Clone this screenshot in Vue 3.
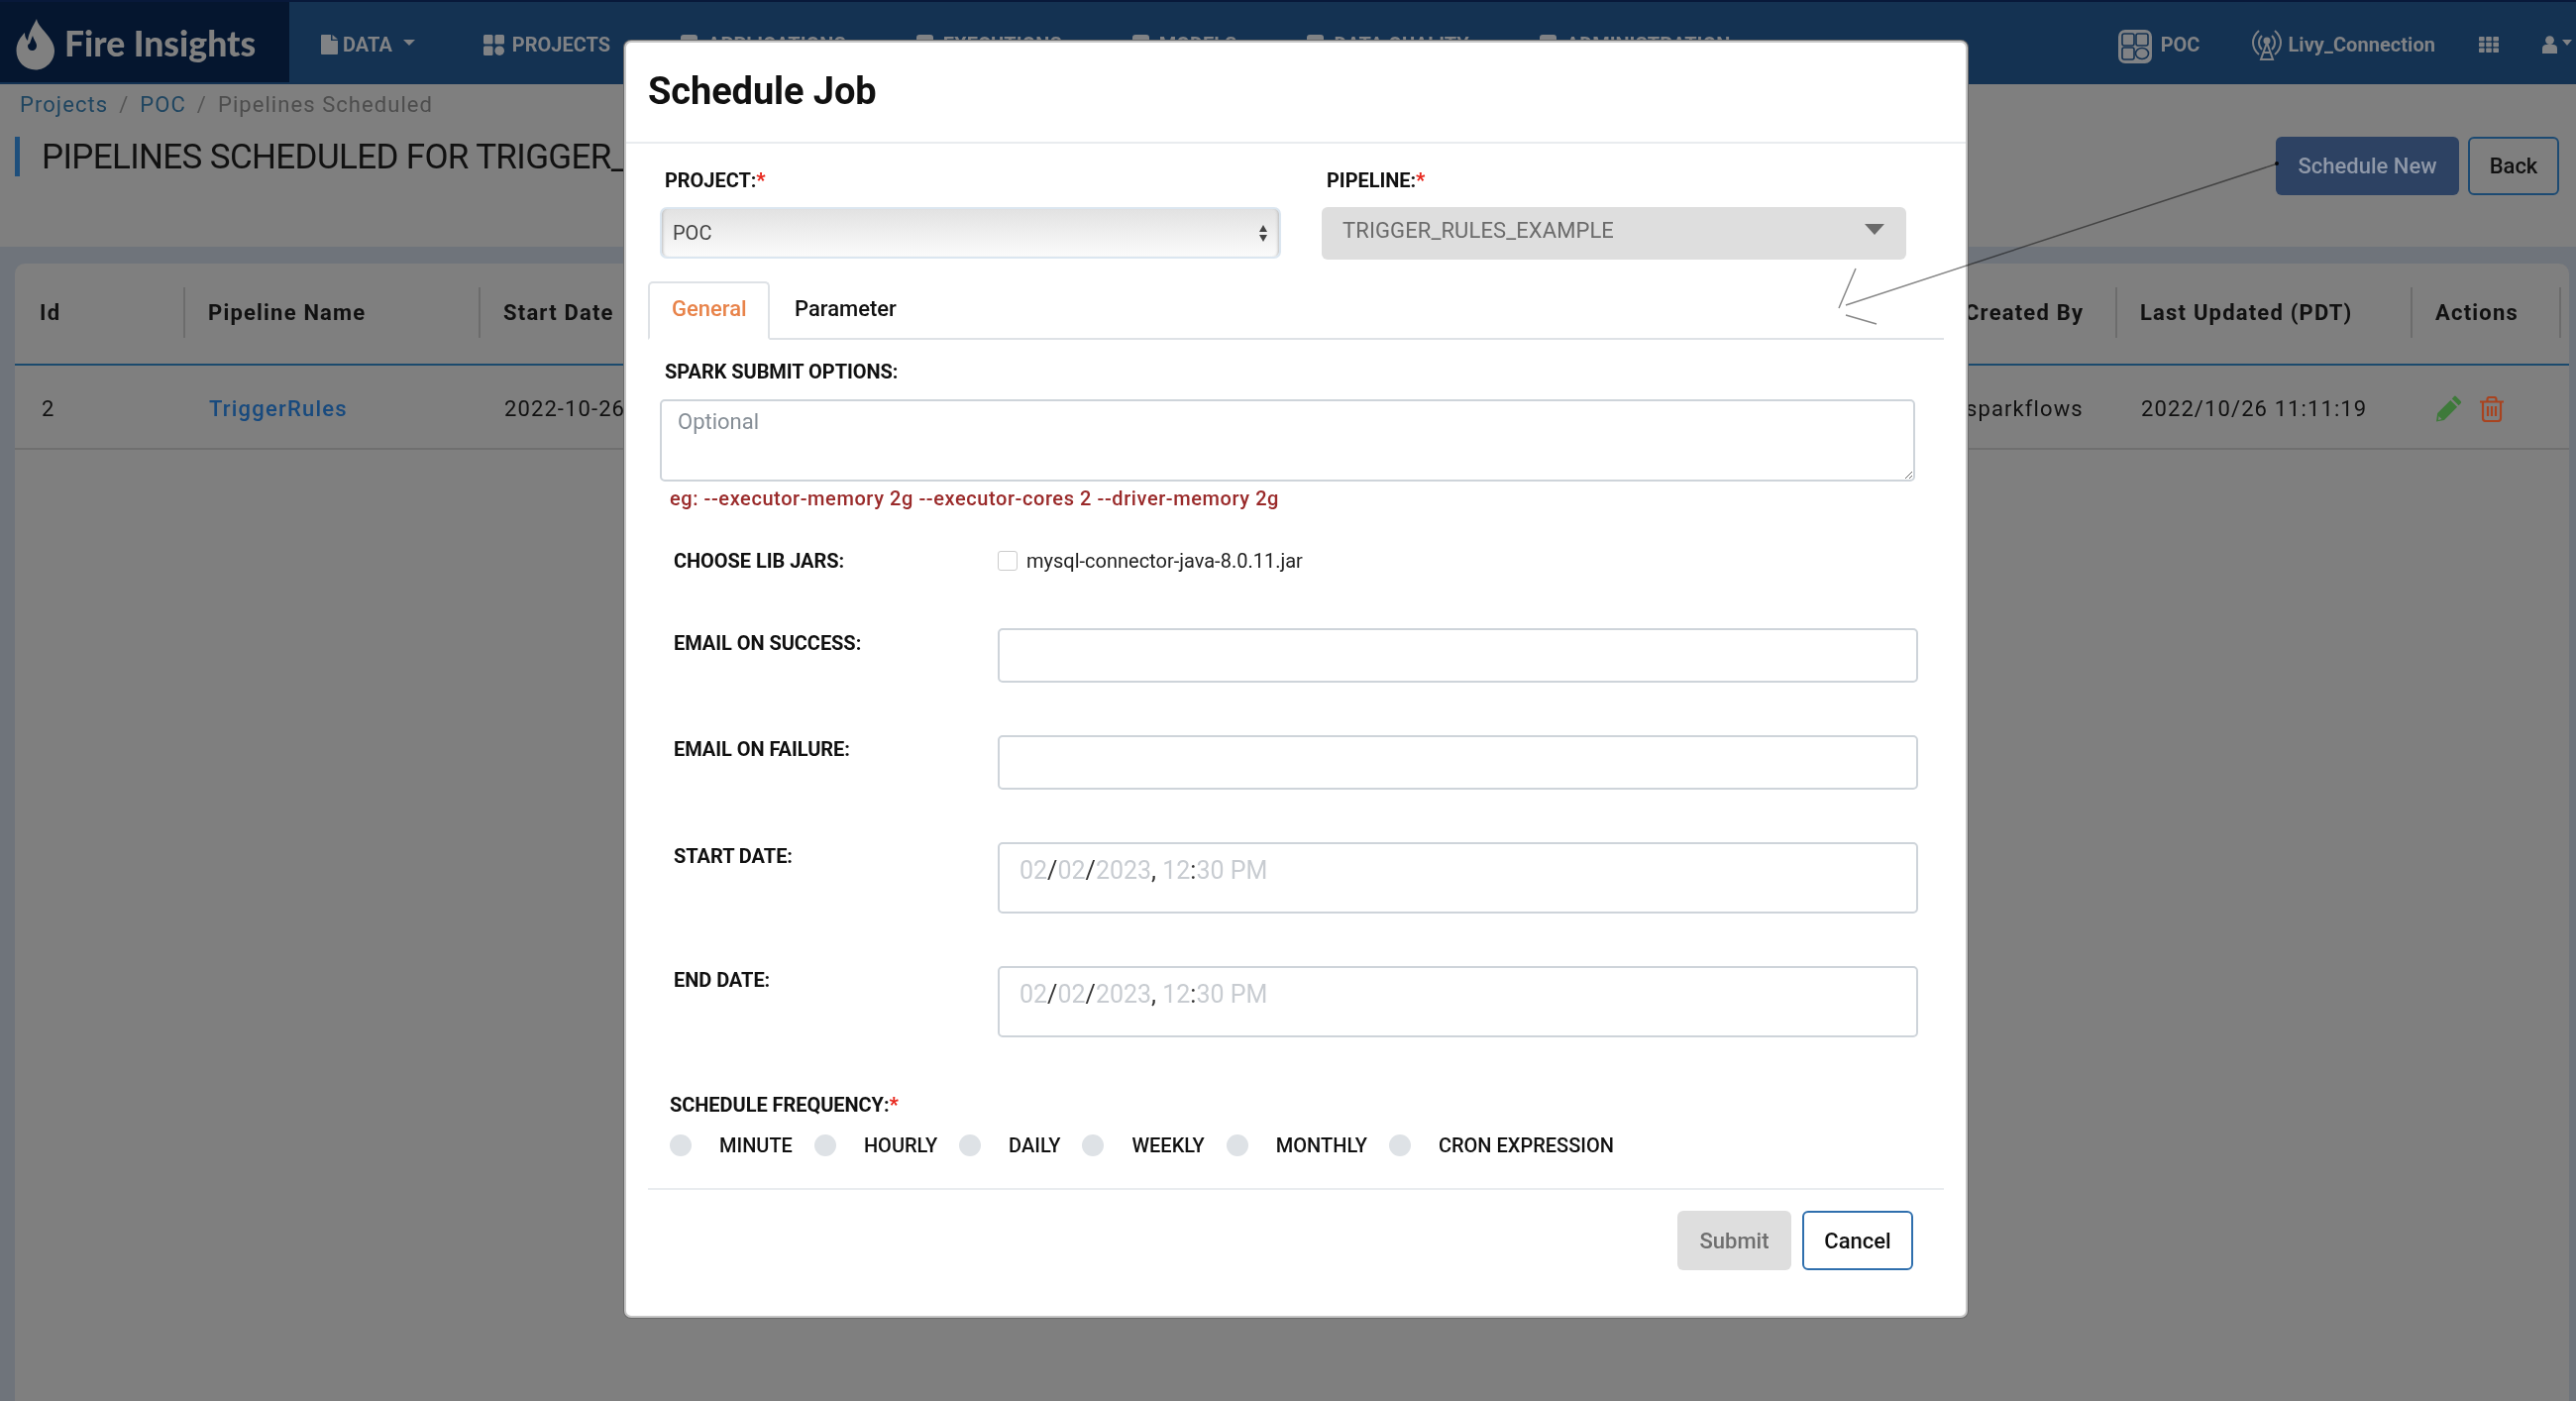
<script setup>
const hiddenNav = [
  { label: 'APPLICATIONS', icon: 'app' },
  { label: 'EXECUTIONS', icon: 'exec' },
  { label: 'MODELS', icon: 'model' },
  { label: 'DATA QUALITY', icon: 'db' },
  { label: 'ADMINISTRATION', icon: 'admin' },
]
const frequencies = ['MINUTE', 'HOURLY', 'DAILY', 'WEEKLY', 'MONTHLY', 'CRON EXPRESSION']
const dateFields = ['START DATE:', 'END DATE:']
</script>

<template>
  <div class="page">
    <header class="nav">
      <div class="brand">
        <svg class="flame" viewBox="16 19 40 52">
          <path fill-rule="evenodd" d="M37 19C38 28 55 38 55 51C55 62 46 70.5 36 70.5C25 70.5 16.5 62 16.5 51C16.5 43 21 37 25 33C25 37 26 39 28 41C29 33 33 27 37 19ZM33 36C34 40 37 43 37 46C37 49 35 51 32.5 51C30 51 28 49 28 46.5C28 45 29 44 30 44C31 41 32 38 33 36Z" />
        </svg>
        <span>Fire Insights</span>
      </div>
      <nav class="nav-items">
        <a class="nav-item data">
          <svg class="ico-data" viewBox="0 0 17 20"><path d="M1 0H10V6H17V19Q17 20 16 20H1Q0 20 0 19V1Q0 0 1 0ZM11.5 0L17 4.8H11.5Z" /></svg>
          DATA <i class="caret"></i>
        </a>
        <a class="nav-item">
          <svg class="ico-proj" viewBox="0 0 21 21">
            <rect width="9.5" height="9.5" rx="1.5" />
            <rect x="11.5" width="9.5" height="9.5" rx="1.5" />
            <rect y="11.5" width="9.5" height="9.5" rx="1.5" />
            <circle cx="16.2" cy="16.2" r="4.8" />
          </svg>
          PROJECTS
        </a>
        <a v-for="item in hiddenNav" :key="item.label" class="nav-item">
          <svg class="ico-proj" viewBox="0 0 21 21"><rect x="2" width="17" height="21" rx="3" /></svg>
          {{ item.label }}
        </a>
      </nav>
      <div class="nav-right">
        <a class="nav-item tight">
          <svg class="ico-poc" viewBox="0 0 34 34">
            <rect width="34" height="34" rx="7" class="fill" />
            <rect x="4" y="4" width="12" height="12" rx="2" class="cell" />
            <rect x="18" y="4" width="12" height="12" rx="2" class="cell" />
            <rect x="4" y="18" width="12" height="12" rx="2" class="cell" />
            <ellipse cx="24" cy="24" rx="6.5" ry="5.5" class="cell" />
          </svg>
          POC
        </a>
        <a class="nav-item tight livy">
          <svg class="ico-livy" viewBox="0 0 30 32" fill="none">
            <path d="M7 2C-1 9 -1 19 7 26M23 2C31 9 31 19 23 26M10 7C6 11 6 17 10 21M20 7C24 11 24 17 20 21" />
            <circle cx="15" cy="12" r="3.5" class="dot" />
            <path d="M15 14L9 31H21ZM12 24H18" />
          </svg>
          Livy_Connection
        </a>
        <svg class="ico-grid" viewBox="0 0 20 16">
          <g v-for="y in [0, 5.7, 11.4]" :key="y">
            <rect v-for="x in [0, 7.2, 14.4]" :key="x" :x="x" :y="y" width="5.6" height="4.6" rx="0.8" />
          </g>
        </svg>
        <span class="user">
          <svg class="ico-user" viewBox="0 0 15 18">
            <circle cx="7.5" cy="4.6" r="4.4" />
            <path d="M0 18V13C0 10 2 9 4 9H11C13 9 15 10 15 13V18Z" />
          </svg>
          <i class="caret"></i>
        </span>
      </div>
    </header>

    <div class="crumbs">
      <a>Projects</a><span class="sep">/</span><a>POC</a><span class="sep">/</span><span class="current">Pipelines Scheduled</span>
    </div>

    <div class="title-row">
      <h1>PIPELINES SCHEDULED FOR TRIGGER_RULES_EXAMPLE</h1>
      <div class="title-actions">
        <button class="btn-new">Schedule New</button>
        <button class="btn-back">Back</button>
      </div>
    </div>

    <main class="content">
      <section class="card">
        <div class="tr th">
          <div class="cell-h first"><span>Id</span></div>
          <div class="cell-h"><span>Pipeline Name</span></div>
          <div class="cell-h"><span>Start Date</span></div>
          <div class="cell-h"><span>Created By</span></div>
          <div class="cell-h"><span>Last Updated (PDT)</span></div>
          <div class="cell-h"><span>Actions</span></div>
        </div>
        <div class="tr td">
          <div class="first-d">2</div>
          <div class="link">TriggerRules</div>
          <div>2022-10-26</div>
          <div>sparkflows</div>
          <div>2022/10/26 11:11:19</div>
          <div class="row-actions">
            <svg class="ico-edit" viewBox="0 0 26 27">
              <path d="M19.5 .8L24.8 6Q25.6 7 24.8 8L22.6 10.2L15.8 3.4L18 1Q18.8 .2 19.5 .8ZM14.3 4.9L21.1 11.7L8 25L0 26.5L1.2 18Z" />
              <path class="nib" d="M2.5 21L5.5 24L2 25Z" />
            </svg>
            <svg class="ico-trash" viewBox="0 0 24 26" fill="none">
              <path d="M0 5.5H24M7.5 5V3Q7.5 1 9.5 1H14.5Q16.5 1 16.5 3V5M3 5.5V22Q3 25 6 25H18Q21 25 21 22V5.5" />
              <path d="M8 10V20M12 10V20M16 10V20" />
            </svg>
          </div>
        </div>
      </section>
    </main>

    <div class="modal">
      <div class="modal-head"><h2>Schedule Job</h2></div>
      <div class="modal-body">
        <div class="top-fields">
          <div>
            <label class="lbl pad">PROJECT:<b>*</b></label>
            <div class="project-select">
              <span>POC</span>
              <span class="updown"><i></i><i></i></span>
            </div>
          </div>
          <div>
            <label class="lbl pad">PIPELINE:<b>*</b></label>
            <div class="pipeline-select">
              <span>TRIGGER_RULES_EXAMPLE</span>
              <i class="caret big"></i>
            </div>
          </div>
        </div>

        <div class="tabs">
          <a class="tab active">General</a>
          <a class="tab">Parameter</a>
        </div>

        <label class="lbl pad spark">SPARK SUBMIT OPTIONS:</label>
        <textarea class="spark-input" placeholder="Optional"></textarea>
        <p class="hint">eg: --executor-memory 2g --executor-cores 2 --driver-memory 2g</p>

        <div class="field jars">
          <label class="lbl">CHOOSE LIB JARS:</label>
          <div class="jar"><span class="check"></span>mysql-connector-java-8.0.11.jar</div>
        </div>
        <div class="field first-input">
          <label class="lbl">EMAIL ON SUCCESS:</label>
          <input class="input" />
        </div>
        <div class="field">
          <label class="lbl">EMAIL ON FAILURE:</label>
          <input class="input" />
        </div>
        <div v-for="name in dateFields" :key="name" class="field">
          <label class="lbl">{{ name }}</label>
          <div class="input date">
            <span class="dim">02</span>/<span class="dim">02</span>/<span class="dim">2023</span>, <span class="dim">12</span>:<span class="dim">30 PM</span>
          </div>
        </div>

        <label class="lbl freq">SCHEDULE FREQUENCY:<b>*</b></label>
        <div class="radios">
          <div v-for="f in frequencies" :key="f" class="radio">
            <span class="dot"></span>
            <span>{{ f }}</span>
          </div>
        </div>

        <div class="foot">
          <button class="btn-submit">Submit</button>
          <button class="btn-cancel">Cancel</button>
        </div>
      </div>
    </div>

    <svg class="annotation" width="2600" height="1414">
      <path d="M2299 165L1863 308M1873 271L1856 311M1863 318L1894 327" />
      <circle cx="2298" cy="165" r="2" />
    </svg>
  </div>
</template>

<style>
html, body { margin: 0; background: #7f7f7f; }
</style>

<style scoped>
* { box-sizing: border-box; }
.page {
  position: relative;
  width: 2600px;
  height: 1414px;
  overflow: hidden;
  background: #7f7f7f;
  font-family: Roboto, "Liberation Sans", sans-serif;
  color: #111;
}

/* navbar */
.nav {
  display: flex;
  align-items: stretch;
  height: 85px;
  background: #143252;
  border-top: 2px solid #08193a;
  color: #808285;
}
.brand {
  display: flex;
  align-items: center;
  gap: 9px;
  width: 292px;
  height: 81px;
  padding-left: 16px;
  background: #05162f;
  font-family: Lato, Roboto, sans-serif;
  font-weight: 900;
  font-size: 35.5px;
  color: #808080;
}
.brand span { margin-top: 2px; }
.flame { width: 40px; height: 52px; fill: #808080; margin-top: 4px; }
.nav-items {
  display: flex;
  align-items: center;
  gap: 69px;
  padding-left: 32px;
  margin-top: 3px;
}
.nav-item {
  display: flex;
  align-items: center;
  gap: 8px;
  font-size: 20px;
  font-weight: 700;
  white-space: nowrap;
}
.nav-item.data { gap: 5px; }
.caret {
  display: inline-block;
  border-left: 6px solid transparent;
  border-right: 6px solid transparent;
  border-top: 6px solid currentColor;
  margin-left: 6px;
  margin-top: -4px;
}
.ico-data { width: 17px; height: 20px; fill: currentColor; }
.ico-proj { width: 21px; height: 21px; fill: currentColor; }
.nav-right {
  display: flex;
  align-items: center;
  margin-left: auto;
  margin-top: 3px;
  padding-right: 4px;
}
.tight { gap: 9px; font-size: 20px; }
.livy { margin-left: 53px; gap: 6px; letter-spacing: 0.05px; }
.ico-poc { width: 34px; height: 34px; margin-top: 4px; }
.ico-poc .fill { fill: #808285; }
.ico-poc .cell { fill: #808285; stroke: #143252; stroke-width: 1.6; }
.ico-livy { width: 30px; height: 32px; stroke: currentColor; stroke-width: 2; }
.ico-livy .dot { fill: currentColor; stroke: none; }
.ico-grid { width: 20px; height: 16px; fill: currentColor; margin-left: 44px; }
.user { display: flex; align-items: center; margin-left: 44px; }
.ico-user { width: 15px; height: 18px; fill: currentColor; }
.user .caret { margin-left: 5px; border-left-width: 5.5px; border-right-width: 5.5px; }

/* page head */
.crumbs {
  height: 40px;
  padding: 1px 0 0 20px;
  font-size: 22px;
  line-height: 40px;
  letter-spacing: 1.06px;
  color: #1f4560;
}
.sep { margin: 0 11px; color: #555; }
.current { color: #4d4d4d; }
.title-row {
  display: flex;
  justify-content: space-between;
  height: 124px;
  padding: 13px 17px 0 15px;
}
h1 {
  margin: 0;
  height: 40px;
  padding-left: 22px;
  border-left: 5px solid #1e4f7c;
  font-size: 35px;
  font-weight: 400;
  line-height: 42px;
  letter-spacing: -0.65px;
  white-space: nowrap;
}
.title-actions { display: flex; gap: 9px; height: 59px; }
button { font-family: inherit; font-size: 22px; font-weight: 500; border-radius: 6px; }
.btn-new { width: 185px; background: #2d4263; border: 0; color: #8f98a8; }
.btn-back { width: 92px; background: transparent; border: 2px solid #1c4a72; color: #111; }

/* table */
.content {
  height: 1165px;
  padding: 17px 7px 0 15px;
  background: #6f747b;
}
.card {
  height: 100%;
  background: #7f7f7f;
  border-radius: 10px 10px 0 0;
}
.tr {
  display: grid;
  grid-template-columns: 172px 298px 1475px 177px 298px 150px;
  letter-spacing: 1.2px;
}
.th {
  align-items: center;
  height: 103px;
  padding-bottom: 2px;
  border-bottom: 2px solid #1b4a6d;
  font-size: 22px;
  font-weight: 700;
}
.cell-h {
  display: flex;
  align-items: center;
  height: 51px;
  padding-left: 23px;
  border-right: 2px solid #6c6c6c;
}
.cell-h.first { padding-left: 25px; }
.td {
  align-items: center;
  height: 85px;
  padding-top: 4px;
  border-bottom: 2px solid #6f6f6f;
  font-size: 22px;
  letter-spacing: 1.1px;
}
.td > div { padding-left: 24px; }
.td > .first-d { padding-left: 27px; }
.link { color: #184a7e; font-weight: 500; letter-spacing: 1.2px; }
.row-actions { display: flex; align-items: center; gap: 18px; }
.ico-edit { width: 26px; height: 27px; fill: #3e7a3a; }
.ico-edit .nib { fill: #7f7f7f; }
.ico-trash { width: 24px; height: 26px; stroke: #a8431f; stroke-width: 2.2; }

/* modal */
.modal {
  position: absolute;
  left: 630px;
  top: 41px;
  width: 1356px;
  height: 1289px;
  background: #fff;
  border: 2px solid #c6c6c6;
  border-radius: 7px;
  box-shadow: 0 0 0 1px #6a6a6a;
}
.modal-head {
  display: flex;
  align-items: center;
  height: 102px;
  padding: 0 22px 2px;
  border-bottom: 2px solid #e9ecef;
}
h2 { margin: 0; font-size: 38px; font-weight: 700; letter-spacing: -0.1px; }
.modal-body { padding: 0 22px; }
.lbl {
  display: block;
  height: 24px;
  font-size: 20px;
  font-weight: 700;
  line-height: 24px;
  letter-spacing: -0.05px;
  white-space: nowrap;
}
.lbl b { color: #e8281e; }
.lbl.pad { padding-left: 5px; }
.top-fields {
  display: grid;
  grid-template-columns: 627px 590px;
  gap: 41px;
  padding: 25px 0 0 12px;
}
.top-fields .lbl { margin-bottom: 15px; }
.project-select {
  display: flex;
  align-items: center;
  justify-content: space-between;
  height: 52px;
  padding: 0 12px 0 11px;
  border: 2px solid #dbe6f0;
  border-radius: 7px;
  background: linear-gradient(#e2e2e2, #fbfbfb);
  box-shadow: inset 3px 0 3px -2px #bbb, inset -3px 0 3px -2px #bbb;
  font-size: 20px;
  color: #444;
}
.updown { display: flex; flex-direction: column; gap: 3px; }
.updown i {
  display: block;
  border-left: 4.5px solid transparent;
  border-right: 4.5px solid transparent;
  border-bottom: 7px solid #444;
}
.updown i + i { border-bottom: 0; border-top: 7px solid #444; }
.pipeline-select {
  display: flex;
  align-items: center;
  justify-content: space-between;
  height: 53px;
  padding: 0 22px 6px 21px;
  border-radius: 6px;
  background: #dedede;
  font-size: 22px;
  letter-spacing: 0.1px;
  color: #6b6b6b;
}
.caret.big {
  border-left-width: 10px;
  border-right-width: 10px;
  border-top-width: 11px;
  margin-top: -2px;
}
.tabs {
  display: flex;
  height: 59px;
  margin-top: 22px;
  border-bottom: 2px solid #dee2e6;
  font-size: 22px;
  font-weight: 500;
}
.tab {
  display: flex;
  align-items: center;
  height: 59px;
  padding: 0 25px 5px;
}
.tab.active {
  width: 123px;
  padding: 0 22px 5px;
  background: #fff;
  border: 2px solid #dee2e6;
  border-bottom-color: #fff;
  border-radius: 5px 5px 0 0;
  color: #e8834a;
}
.spark { margin: 20px 0 16px 12px; }
.spark-input {
  display: block;
  width: 1267px;
  height: 83px;
  margin-left: 12px;
  padding: 8px 16px;
  border: 2px solid #ced4da;
  border-radius: 5px;
  font-family: inherit;
  font-size: 22px;
  outline: none;
}
.spark-input::placeholder { color: #868e96; }
.hint {
  height: 24px;
  margin: 5px 0 0 22px;
  font-size: 20px;
  font-weight: 500;
  line-height: 24px;
  letter-spacing: 0.58px;
  color: #9a2a2a;
}
.field {
  display: grid;
  grid-template-columns: 327px 929px;
  margin: 53px 0 0 26px;
}
.field .lbl { padding-top: 2px; height: auto; }
.field.jars { margin-top: 39px; }
.field.jars .lbl { padding-top: 0; }
.field.first-input { margin-top: 56px; }
.field.first-input .lbl { padding-top: 3px; }
.jar {
  display: flex;
  align-items: center;
  gap: 9px;
  height: 24px;
  font-size: 20px;
  color: #222;
}
.check {
  width: 20px;
  height: 20px;
  border: 1px solid #ccc;
  border-radius: 3px;
}
.input {
  display: block;
  width: 929px;
  height: 55px;
  border: 2px solid #ced4da;
  border-radius: 5px;
  outline: none;
}
.date {
  height: 72px;
  padding: 13px 20px 0;
  font-size: 25px;
  line-height: 28px;
  color: #333;
}
.dim { color: #c8ccd1; }
.freq { margin: 56px 0 18px 22px; }
.radios { display: flex; gap: 22px; padding-left: 22px; }
.radio {
  display: flex;
  align-items: center;
  gap: 28px;
  height: 22px;
  font-size: 20px;
  font-weight: 500;
  white-space: nowrap;
}
.radio .dot {
  flex: none;
  width: 22px;
  height: 22px;
  border-radius: 50%;
  background: #dee2e6;
}
.foot {
  display: flex;
  justify-content: flex-end;
  gap: 11px;
  margin-top: 32px;
  padding: 21px 31px 0 0;
  border-top: 2px solid #e9ecef;
}
.btn-submit { width: 115px; height: 60px; border: 0; background: #dedede; color: #6f6f6f; }
.btn-cancel { width: 112px; height: 60px; border: 2px solid #2f6fad; background: #fff; color: #111; }

.annotation { position: absolute; left: 0; top: 0; pointer-events: none; mix-blend-mode: multiply; }
.annotation path { fill: none; stroke: #888; stroke-width: 1.5; }
.annotation circle { fill: #222; }
</style>
